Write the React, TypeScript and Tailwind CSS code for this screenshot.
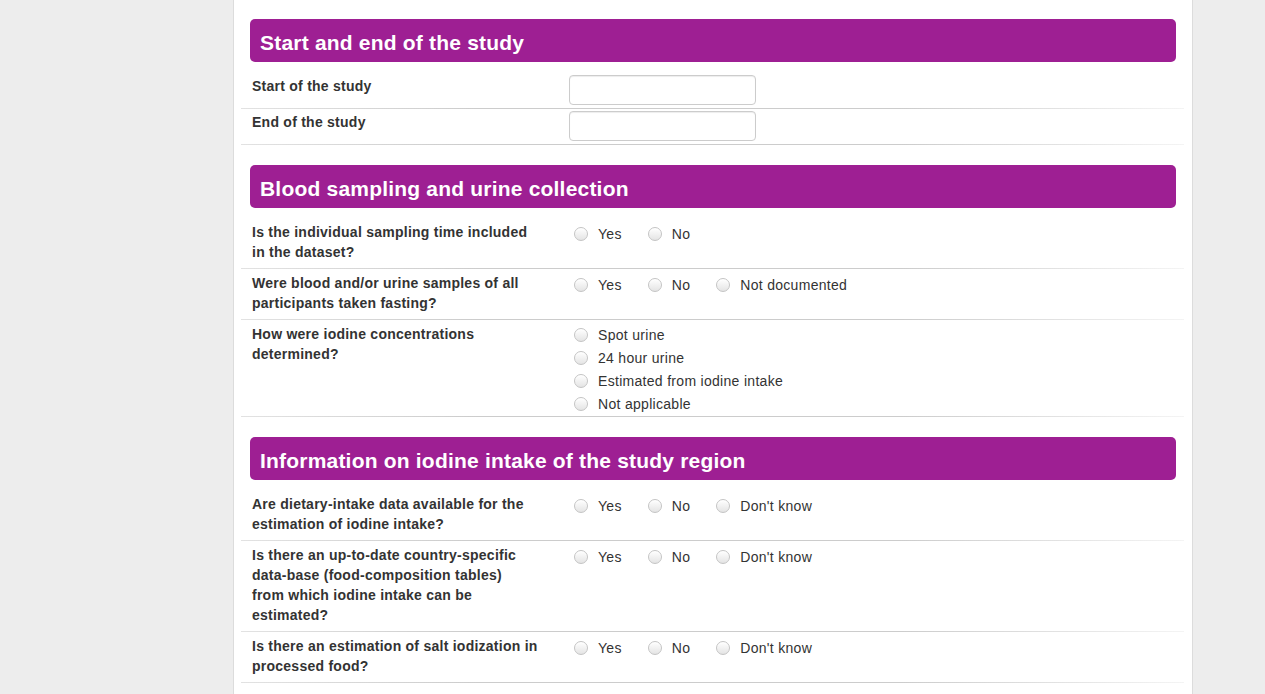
import React from "react";

const font = { fontFamily: '"Liberation Sans", Arial, Helvetica, sans-serif' };

function Radio() {
  return (
    <span className="inline-block w-[14px] h-[14px] rounded-full border border-[#c4c4c4] bg-[linear-gradient(#ffffff,#e4e4e4)] shadow-[inset_0_1px_1px_rgba(255,255,255,0.8)] shrink-0" />
  );
}

function Option({ label }: { label: string }) {
  return (
    <div className="flex items-center h-[23px] text-[14px] tracking-[0.3px] text-[#333]">
      <span className="ml-[5px] flex items-center">
        <Radio />
      </span>
      <span className="ml-[10px] leading-[20px] whitespace-nowrap">{label}</span>
    </div>
  );
}

function Sep() {
  return <div className="h-px bg-[linear-gradient(to_right,#e2e2e2,#cccccc_25%,#cccccc_70%,#f4f4f4)]" />;
}

function Header({ title, mb = "mb-[10px]" }: { title: string; mb?: string }) {
  return (
    <div
      className={`h-[43px] rounded-[5px] bg-[#9e1f93] flex items-center pl-[10px] pt-[4px] text-white text-[21px] tracking-[0.2px] font-bold ${mb}`}
    >
      {title}
    </div>
  );
}

const labelCls = "w-[286px] text-[14px] tracking-[0.25px] leading-[20px] font-bold text-[#333]";

function InputRow({ label }: { label: string }) {
  return (
    <div>
      <div className="flex pt-[2px] pb-[3px] pl-[11px]">
        <div className={`${labelCls} pt-[1px]`}>{label}</div>
        <div className="ml-[31px]">
          <div className="w-[187px] h-[30px] rounded-[4px] border border-[#cccccc] bg-white shadow-[inset_0_1px_1px_rgba(0,0,0,0.075)]" />
        </div>
      </div>
      <Sep />
    </div>
  );
}

function InlineRow({ label, options }: { label: React.ReactNode; options: string[] }) {
  return (
    <div>
      <div className="flex pt-[4px] pb-[6px] pl-[11px]">
        <div className={labelCls}>{label}</div>
        <div className="ml-[31px] flex gap-[21px] h-[23px]">
          {options.map((o) => (
            <Option key={o} label={o} />
          ))}
        </div>
      </div>
      <Sep />
    </div>
  );
}

function StackRow({ label, options }: { label: React.ReactNode; options: string[] }) {
  return (
    <div>
      <div className="flex pt-[4px] pb-[6px] pl-[11px]">
        <div className={labelCls}>{label}</div>
        <div className="ml-[31px] flex flex-col -mt-[1px] -mb-[5px]">
          {options.map((o) => (
            <Option key={o} label={o} />
          ))}
        </div>
      </div>
      <Sep />
    </div>
  );
}

export default function App() {
  return (
    <div className="min-h-screen bg-[#ededed]" style={font}>
      <div className="ml-[233px] w-[960px] min-h-screen bg-white border-l border-r border-[#dcdcdc] px-[16px] pt-[19px] pb-[20px]">
        <Header title="Start and end of the study" mb="mb-[11px]" />
        <div className="-ml-[9px] -mr-[8px]">
          <InputRow label="Start of the study" />
          <InputRow label="End of the study" />
        </div>

        <div className="mt-[20px]">
          <Header title="Blood sampling and urine collection" />
          <div className="-ml-[9px] -mr-[8px]">
            <InlineRow label="Is the individual sampling time included in the dataset?" options={["Yes", "No"]} />
            <InlineRow
              label="Were blood and/or urine samples of all participants taken fasting?"
              options={["Yes", "No", "Not documented"]}
            />
            <StackRow
              label="How were iodine concentrations determined?"
              options={["Spot urine", "24 hour urine", "Estimated from iodine intake", "Not applicable"]}
            />
          </div>
        </div>

        <div className="mt-[20px]">
          <Header title="Information on iodine intake of the study region" />
          <div className="-ml-[9px] -mr-[8px]">
            <InlineRow
              label="Are dietary-intake data available for the estimation of iodine intake?"
              options={["Yes", "No", "Don't know"]}
            />
            <InlineRow
              label="Is there an up-to-date country-specific data-base (food-composition tables) from which iodine intake can be estimated?"
              options={["Yes", "No", "Don't know"]}
            />
            <InlineRow
              label="Is there an estimation of salt iodization in processed food?"
              options={["Yes", "No", "Don't know"]}
            />
          </div>
        </div>
      </div>
    </div>
  );
}
